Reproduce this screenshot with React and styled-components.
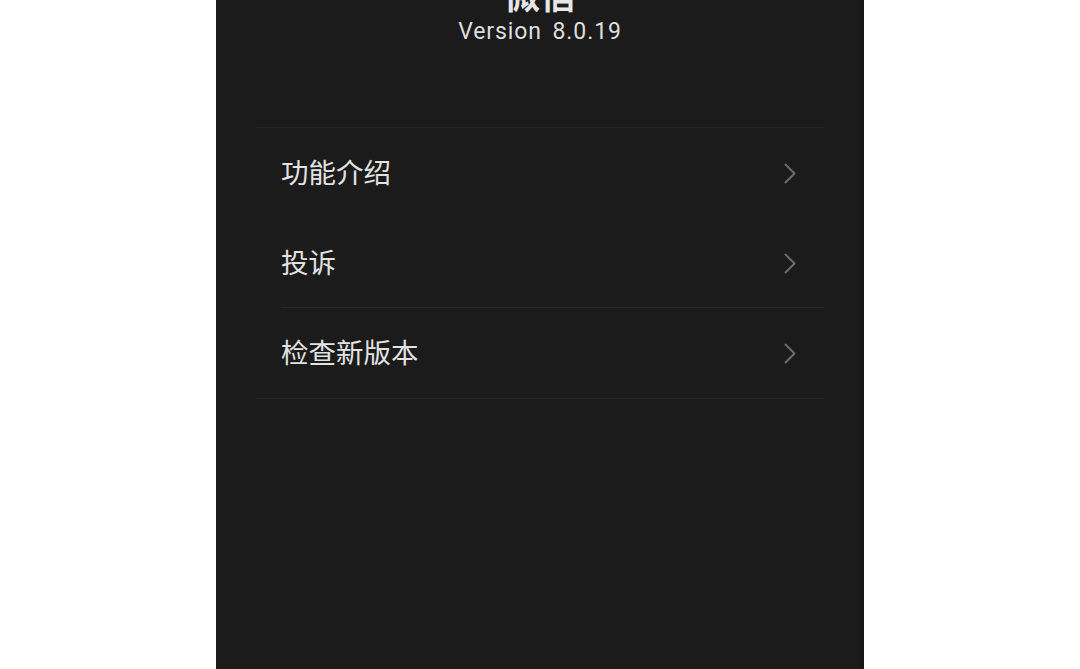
import React from "react";
import styled, { createGlobalStyle } from "styled-components";

const Global = createGlobalStyle`
  html, body { margin: 0; padding: 0; background: #ffffff; }
  body { font-family: "Noto Sans CJK SC", "Noto Sans", sans-serif; }
  #root { min-height: 669px; }
`;

const Page = styled.div`
  display: flex;
  justify-content: center;
  height: 669px;
  overflow: hidden;
  background: #ffffff;
`;

const Panel = styled.div`
  width: 648px;
  background: #1b1b1b;
  box-shadow: inset -3px 0 0 #171717;
  display: flex;
  flex-direction: column;
  overflow: hidden;
`;

const Header = styled.div`
  display: flex;
  flex-direction: column;
  align-items: center;
  height: 127px;
`;

const Title = styled.div`
  font-family: "Noto Sans CJK SC", sans-serif;
  font-weight: 700;
  font-size: 36px;
  line-height: 36px;
  color: #e6e6e6;
  margin-top: -25px;
`;

const Version = styled.div`
  font-family: Roboto, "Noto Sans", sans-serif;
  font-size: 23px;
  line-height: 26px;
  color: #dedede;
  margin-top: 8px;
  letter-spacing: 0.9px;
  word-spacing: 4px;
`;

const List = styled.div`
  margin: 0 40px;
  border-top: 1px solid #262626;
  border-bottom: 1px solid #262626;
  display: flex;
  flex-direction: column;
`;

const Row = styled.div`
  height: 90px;
  display: flex;
  align-items: center;
  justify-content: space-between;
  padding: 0 28px 0 25px;
  position: relative;
  ${(p) =>
    p.$divider &&
    `
    &::after {
      content: "";
      position: absolute;
      left: 25px;
      right: 0;
      bottom: 0;
      height: 1px;
      background: #272727;
    }
  `}
`;

const Label = styled.span`
  font-family: "Noto Sans CJK SC", sans-serif;
  font-size: 27.5px;
  line-height: 1;
  color: #e2e2e2;
  margin-bottom: 3px;
`;

const Chevron = () => (
  <svg width="12" height="21" viewBox="0 0 12 21" fill="none">
    <path d="M1.5 1.5 L10.5 10.5 L1.5 19.5" stroke="#6b6b6b" strokeWidth="2" strokeLinecap="round" strokeLinejoin="round" />
  </svg>
);

const items = [
  { label: "功能介绍", divider: false },
  { label: "投诉", divider: true },
  { label: "检查新版本", divider: false },
];

export default function App() {
  return (
    <>
      <Global />
      <Page>
        <Panel>
          <Header>
            <Title>微信</Title>
            <Version>Version 8.0.19</Version>
          </Header>
          <List>
            {items.map((it) => (
              <Row key={it.label} $divider={it.divider}>
                <Label>{it.label}</Label>
                <Chevron />
              </Row>
            ))}
          </List>
        </Panel>
      </Page>
    </>
  );
}
